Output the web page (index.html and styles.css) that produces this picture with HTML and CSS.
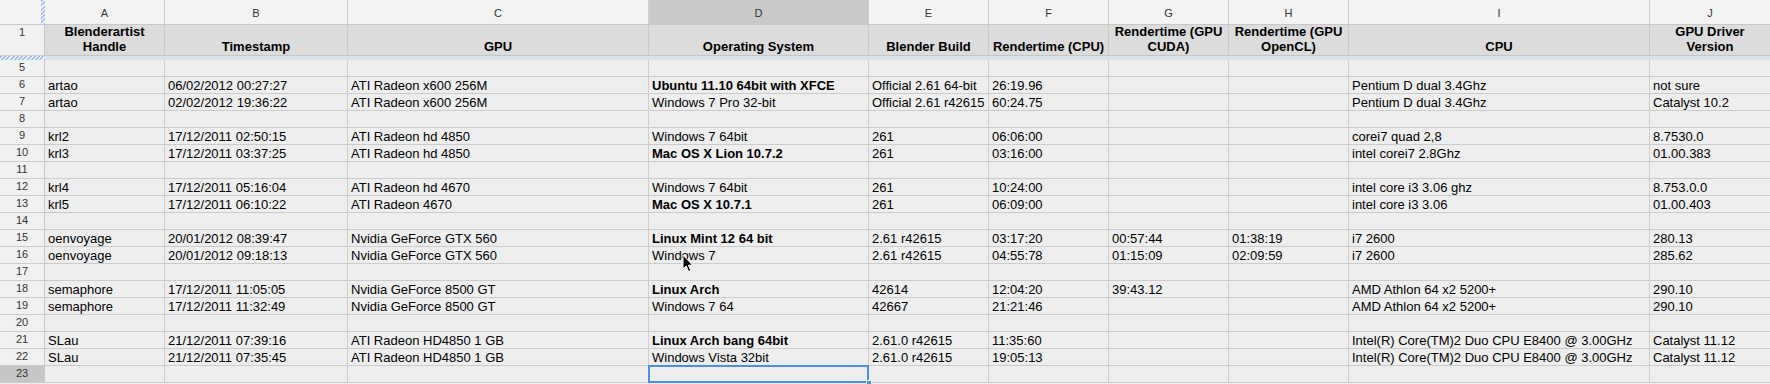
FILE: index.html
```html
<!DOCTYPE html>
<html>
<head>
<meta charset="utf-8">
<link rel="stylesheet" href="styles.css">
</head>
<body>
<div class="sheet">
  <div class="corner"><div class="vhatch"></div></div>
  <div class="ch">A</div><div class="ch">B</div><div class="ch">C</div><div class="ch sel">D</div><div class="ch">E</div><div class="ch">F</div><div class="ch">G</div><div class="ch">H</div><div class="ch">I</div><div class="ch">J</div>

  <div class="rh">1</div>
  <div class="hd"><span>Blenderartist Handle</span></div>
  <div class="hd"><span>Timestamp</span></div>
  <div class="hd"><span>GPU</span></div>
  <div class="hd"><span>Operating System</span></div>
  <div class="hd"><span>Blender Build</span></div>
  <div class="hd"><span>Rendertime (CPU)</span></div>
  <div class="hd"><span>Rendertime (GPU CUDA)</span></div>
  <div class="hd"><span>Rendertime (GPU OpenCL)</span></div>
  <div class="hd"><span>CPU</span></div>
  <div class="hd"><span>GPU Driver Version</span></div>

  <div class="freeze"><div class="hhatch"></div><div class="fbar"></div></div>

  <div class="rh">5</div><div class="c"></div><div class="c"></div><div class="c"></div><div class="c"></div><div class="c"></div><div class="c"></div><div class="c"></div><div class="c"></div><div class="c"></div><div class="c"></div>

  <div class="rh">6</div><div class="c">artao</div><div class="c">06/02/2012 00:27:27</div><div class="c">ATI Radeon x600 256M</div><div class="c b">Ubuntu 11.10 64bit with XFCE</div><div class="c">Official 2.61 64-bit</div><div class="c">26:19.96</div><div class="c"></div><div class="c"></div><div class="c">Pentium D dual 3.4Ghz</div><div class="c">not sure</div>

  <div class="rh">7</div><div class="c">artao</div><div class="c">02/02/2012 19:36:22</div><div class="c">ATI Radeon x600 256M</div><div class="c">Windows 7 Pro 32-bit</div><div class="c">Official 2.61 r42615</div><div class="c">60:24.75</div><div class="c"></div><div class="c"></div><div class="c">Pentium D dual 3.4Ghz</div><div class="c">Catalyst 10.2</div>

  <div class="rh">8</div><div class="c"></div><div class="c"></div><div class="c"></div><div class="c"></div><div class="c"></div><div class="c"></div><div class="c"></div><div class="c"></div><div class="c"></div><div class="c"></div>

  <div class="rh">9</div><div class="c">krl2</div><div class="c">17/12/2011 02:50:15</div><div class="c">ATI Radeon hd 4850</div><div class="c">Windows 7 64bit</div><div class="c">261</div><div class="c">06:06:00</div><div class="c"></div><div class="c"></div><div class="c">corei7 quad 2,8</div><div class="c">8.7530.0</div>

  <div class="rh">10</div><div class="c">krl3</div><div class="c">17/12/2011 03:37:25</div><div class="c">ATI Radeon hd 4850</div><div class="c b">Mac OS X Lion 10.7.2</div><div class="c">261</div><div class="c">03:16:00</div><div class="c"></div><div class="c"></div><div class="c">intel corei7 2.8Ghz</div><div class="c">01.00.383</div>

  <div class="rh">11</div><div class="c"></div><div class="c"></div><div class="c"></div><div class="c"></div><div class="c"></div><div class="c"></div><div class="c"></div><div class="c"></div><div class="c"></div><div class="c"></div>

  <div class="rh">12</div><div class="c">krl4</div><div class="c">17/12/2011 05:16:04</div><div class="c">ATI Radeon hd 4670</div><div class="c">Windows 7 64bit</div><div class="c">261</div><div class="c">10:24:00</div><div class="c"></div><div class="c"></div><div class="c">intel core i3 3.06 ghz</div><div class="c">8.753.0.0</div>

  <div class="rh">13</div><div class="c">krl5</div><div class="c">17/12/2011 06:10:22</div><div class="c">ATI Radeon 4670</div><div class="c b">Mac OS X 10.7.1</div><div class="c">261</div><div class="c">06:09:00</div><div class="c"></div><div class="c"></div><div class="c">intel core i3 3.06</div><div class="c">01.00.403</div>

  <div class="rh">14</div><div class="c"></div><div class="c"></div><div class="c"></div><div class="c"></div><div class="c"></div><div class="c"></div><div class="c"></div><div class="c"></div><div class="c"></div><div class="c"></div>

  <div class="rh">15</div><div class="c">oenvoyage</div><div class="c">20/01/2012 08:39:47</div><div class="c">Nvidia GeForce GTX 560</div><div class="c b">Linux Mint 12 64 bit</div><div class="c">2.61 r42615</div><div class="c">03:17:20</div><div class="c">00:57:44</div><div class="c">01:38:19</div><div class="c">i7 2600</div><div class="c">280.13</div>

  <div class="rh">16</div><div class="c">oenvoyage</div><div class="c">20/01/2012 09:18:13</div><div class="c">Nvidia GeForce GTX 560</div><div class="c">Windows 7</div><div class="c">2.61 r42615</div><div class="c">04:55:78</div><div class="c">01:15:09</div><div class="c">02:09:59</div><div class="c">i7 2600</div><div class="c">285.62</div>

  <div class="rh">17</div><div class="c"></div><div class="c"></div><div class="c"></div><div class="c"></div><div class="c"></div><div class="c"></div><div class="c"></div><div class="c"></div><div class="c"></div><div class="c"></div>

  <div class="rh">18</div><div class="c">semaphore</div><div class="c">17/12/2011 11:05:05</div><div class="c">Nvidia GeForce 8500 GT</div><div class="c b">Linux Arch</div><div class="c">42614</div><div class="c">12:04:20</div><div class="c">39:43.12</div><div class="c"></div><div class="c">AMD Athlon 64 x2 5200+</div><div class="c">290.10</div>

  <div class="rh">19</div><div class="c">semaphore</div><div class="c">17/12/2011 11:32:49</div><div class="c">Nvidia GeForce 8500 GT</div><div class="c">Windows 7 64</div><div class="c">42667</div><div class="c">21:21:46</div><div class="c"></div><div class="c"></div><div class="c">AMD Athlon 64 x2 5200+</div><div class="c">290.10</div>

  <div class="rh">20</div><div class="c"></div><div class="c"></div><div class="c"></div><div class="c"></div><div class="c"></div><div class="c"></div><div class="c"></div><div class="c"></div><div class="c"></div><div class="c"></div>

  <div class="rh">21</div><div class="c">SLau</div><div class="c">21/12/2011 07:39:16</div><div class="c">ATI Radeon HD4850 1 GB</div><div class="c b">Linux Arch bang 64bit</div><div class="c">2.61.0 r42615</div><div class="c">11:35:60</div><div class="c"></div><div class="c"></div><div class="c">Intel(R) Core(TM)2 Duo CPU E8400 @ 3.00GHz</div><div class="c">Catalyst 11.12</div>

  <div class="rh">22</div><div class="c">SLau</div><div class="c">21/12/2011 07:35:45</div><div class="c">ATI Radeon HD4850 1 GB</div><div class="c">Windows Vista 32bit</div><div class="c">2.61.0 r42615</div><div class="c">19:05:13</div><div class="c"></div><div class="c"></div><div class="c">Intel(R) Core(TM)2 Duo CPU E8400 @ 3.00GHz</div><div class="c">Catalyst 11.12</div>

  <div class="rh sel">23</div><div class="c"></div><div class="c"></div><div class="c"></div><div class="c active"><div class="selbox"></div><div class="handle"></div></div><div class="c"></div><div class="c"></div><div class="c"></div><div class="c"></div><div class="c"></div><div class="c"></div>
</div>

<svg class="cursor" width="13" height="20" viewBox="0 0 13 20">
  <path d="M1 1 L1 15 L4.2 12 L6.6 17.6 L8.8 16.6 L6.4 11.2 L10.6 11.2 Z" fill="#000" stroke="#fff" stroke-width="1" stroke-linejoin="round"/>
</svg>
</body>
</html>
```

FILE: styles.css
```css
* { box-sizing: border-box; }

html, body {
  margin: 0;
  padding: 0;
  background: #eeeeee;
  overflow: hidden;
}

body {
  font-family: "Liberation Sans", Arial, sans-serif;
  font-size: 13px;
  color: #000;
  position: relative;
  width: 1770px;
  height: 384px;
}

.sheet {
  display: grid;
  grid-template-columns: 45px 120px 183px 301px 220px 120px 120px 120px 120px 301px 121px;
  grid-template-rows: 25px 31px 4px repeat(19, 17px);
  width: 1771px;
}

.corner {
  background: #f3f3f3;
  border-bottom: 1px solid #c8c8c8;
  display: flex;
  justify-content: flex-end;
}

.vhatch {
  width: 4px;
  height: 100%;
  background: repeating-linear-gradient(-45deg, #9dbdf2 0 1.4px, #e9f0fc 1.4px 3px);
}

.ch {
  background: #f3f3f3;
  border-right: 1px solid #cfcfcf;
  border-bottom: 1px solid #c8c8c8;
  font-size: 11px;
  color: #333;
  display: flex;
  align-items: center;
  justify-content: center;
  padding-top: 1px;
}

.ch.sel {
  background: #c9c9c9;
}

.rh {
  background: #f1f1f1;
  border-right: 1px solid #c8c8c8;
  border-bottom: 1px solid #cccccc;
  font-size: 11px;
  line-height: 13px;
  color: #333;
  text-align: center;
  padding-top: 1px;
}

.rh.sel {
  background: #c6c6c6;
}

.hd {
  background: #dcdcdc;
  border-right: 1px solid #c8c8c8;
  border-bottom: 1px solid #c6c6c6;
  font-weight: bold;
  line-height: 15px;
  display: flex;
  flex-direction: column;
  justify-content: flex-end;
  align-items: center;
  text-align: center;
  padding: 0 3px 1px;
  overflow: visible;
}

.freeze {
  grid-column: 1 / -1;
  display: flex;
}

.hhatch {
  width: 45px;
  height: 100%;
  background: repeating-linear-gradient(-45deg, #9dbdf2 0 1.4px, #e9f0fc 1.4px 3px);
}

.fbar {
  flex: 1;
  background: #dbe1ea;
}

.c {
  background: #eeeeee;
  border-right: 1px solid #cfcfcf;
  border-bottom: 1px solid #cccccc;
  padding-left: 3px;
  line-height: 17px;
  white-space: nowrap;
  overflow: hidden;
}

.c.b {
  font-weight: bold;
}

.c.active {
  position: relative;
  overflow: visible;
}

.selbox {
  position: absolute;
  left: -1px;
  top: -1px;
  right: -1px;
  bottom: -1px;
  border: 2px solid #4d8fe8;
}

.handle {
  position: absolute;
  right: -4px;
  bottom: -4px;
  width: 6px;
  height: 6px;
  background: #4d8fe8;
  border: 1px solid #fff;
}

.cursor {
  position: absolute;
  left: 682px;
  top: 254px;
}
```
